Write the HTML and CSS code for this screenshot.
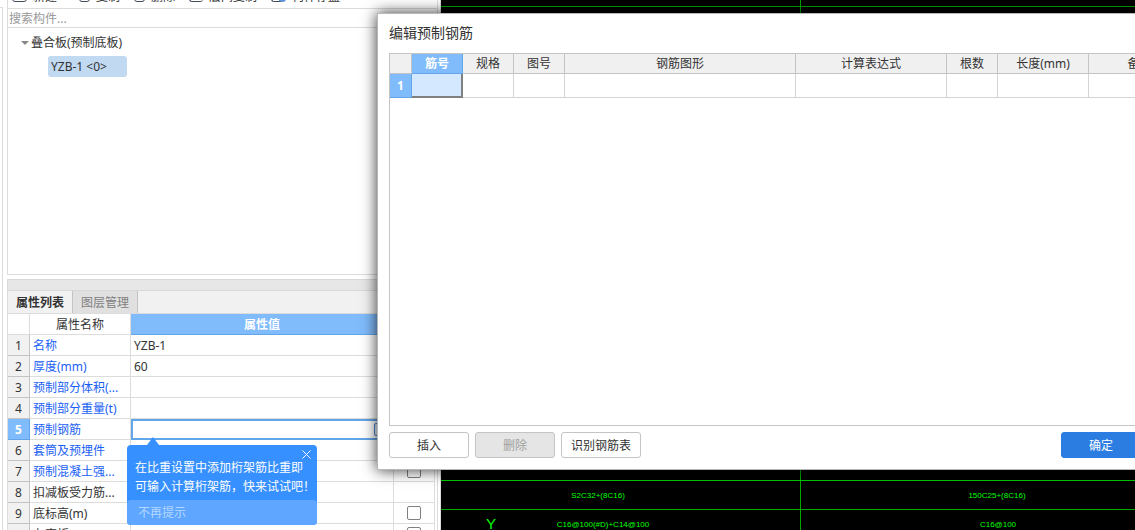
FILE: index.html
```html
<!DOCTYPE html>
<html lang="zh-CN">
<head>
  <meta charset="UTF-8">
  <meta name="viewport" content="width=device-width, initial-scale=1.0">
  <title>编辑预制钢筋</title>
  <link rel="stylesheet" href="styles.css">
</head>
<body>
  <div class="rail"></div>

  <aside class="sidebar">
    <!-- Toolbar, scrolled mostly out of view -->
    <div class="toolbar">
      <button type="button" class="has-menu"><i class="tool-icon wide"></i>新建</button>
      <button type="button"><i class="tool-icon"></i>复制</button>
      <button type="button"><i class="tool-icon"></i>删除</button>
      <button type="button"><i class="tool-icon half"></i>层间复制</button>
      <button type="button"><i class="tool-icon disk"></i>构件存盘</button>
    </div>
    <input class="search" type="text" placeholder="搜索构件..." aria-label="搜索构件">

    <div class="tree">
      <div class="tree-group"><span class="caret"></span>叠合板(预制底板)</div>
      <div class="tree-item">YZB-1 &lt;0&gt;</div>
    </div>

    <div class="splitter"></div>

    <div class="tabs">
      <button type="button" class="tab active">属性列表</button>
      <button type="button" class="tab">图层管理</button>
    </div>

    <div class="props-wrap">
      <table class="props">
        <colgroup><col class="c-num"><col class="c-name"><col class="c-value"><col class="c-check"></colgroup>
        <thead>
          <tr><th></th><th class="name">属性名称</th><th class="picked">属性值</th><th></th></tr>
        </thead>
        <tbody>
          <tr><th>1</th><td class="link">名称</td><td>YZB-1</td><td></td></tr>
          <tr><th>2</th><td class="link">厚度(mm)</td><td>60</td><td></td></tr>
          <tr><th>3</th><td class="link">预制部分体积(...</td><td></td><td></td></tr>
          <tr><th>4</th><td class="link">预制部分重量(t)</td><td></td><td></td></tr>
          <tr class="current"><th>5</th><td class="link">预制钢筋</td><td class="editing">
            <div class="cell-edit">
              <button type="button" class="more" aria-label="编辑预制钢筋">⋯</button>
              <div class="tip">
                <button type="button" class="tip-close" aria-label="关闭">
                  <svg width="9" height="9" viewBox="0 0 9 9"><path d="M0.5 0.5l8 8M8.5 0.5l-8 8" stroke="#fff" fill="none"/></svg>
                </button>
                <p>在比重设置中添加桁架筋比重即<br>可输入计算桁架筋，快来试试吧！</p>
                <button type="button" class="tip-mute">不再提示</button>
              </div>
            </div>
          </td><td></td></tr>
          <tr><th>6</th><td class="link">套筒及预埋件</td><td></td><td></td></tr>
          <tr><th>7</th><td class="link">预制混凝土强...</td><td></td><td><input type="checkbox" aria-label="预制混凝土强度"></td></tr>
          <tr><th>8</th><td>扣减板受力筋...</td><td></td><td></td></tr>
          <tr><th>9</th><td>底标高(m)</td><td></td><td><input type="checkbox" aria-label="底标高"></td></tr>
          <tr><th></th><td>左弯折</td><td></td><td><input type="checkbox" aria-label="左弯折"></td></tr>
        </tbody>
      </table>
    </div>
  </aside>

  <!-- CAD drawing -->
  <main class="canvas">
    <svg class="drawing">
      <g class="grid-lines">
        <path d="M0 6.5H4000M359.5 0V4000M0 509.5H4000"/>
        <path class="bright" d="M0 480.5H4000"/>
      </g>
      <g class="cad-text">
        <text x="157" y="498">S2C32+(8C16)</text>
        <text x="556" y="498">150C25+(8C16)</text>
        <text x="162" y="527">C16@100(#D)+C14@100</text>
        <text x="557" y="527">C16@100</text>
        <text class="axis" x="50" y="529">Y</text>
      </g>
    </svg>
  </main>

  <section class="dialog" role="dialog" aria-labelledby="dialogTitle">
    <h1 id="dialogTitle">编辑预制钢筋</h1>
    <div class="sheet">
      <table>
        <colgroup>
          <col class="w-index"><col class="w-small"><col class="w-small"><col class="w-small"><col class="w-shape">
          <col class="w-formula"><col class="w-small"><col class="w-length"><col class="w-note">
        </colgroup>
        <thead>
          <tr>
            <th></th><th class="picked">筋号</th><th>规格</th><th>图号</th><th>钢筋图形</th>
            <th>计算表达式</th><th>根数</th><th>长度(mm)</th><th>备注</th>
          </tr>
        </thead>
        <tbody>
          <tr><th class="picked">1</th><td class="focus"></td><td></td><td></td><td></td><td></td><td></td><td></td><td></td></tr>
        </tbody>
      </table>
    </div>
    <div class="actions">
      <button type="button">插入</button>
      <button type="button" disabled>删除</button>
      <button type="button">识别钢筋表</button>
      <button type="button" class="primary">确定</button>
    </div>
  </section>
</body>
</html>
```
FILE: styles.css
```css
* {
  box-sizing: border-box;
}
body {
  margin: 0;
  height: 100vh;
  display: flex;
  position: relative;
  overflow: hidden;
  background-color: #fff;
  color: #333;
  font-family: "Noto Sans", "Noto Sans CJK SC", sans-serif;
  font-size: 12px;
  line-height: 18px;
}
button,
input {
  font: inherit;
  color: inherit;
  margin: 0;
}
table {
  border-collapse: separate;
  border-spacing: 0;
  table-layout: fixed;
}
.rail {
  width: 3px;
  margin-top: 7px;
  border-top: 1px solid #dcdcdc;
  border-right: 1px solid #dcdcdc;
}

/* Left panel */
.sidebar {
  flex: 0 0 438px;
  padding: 0 2px 0 4px;
  border-right: 1px solid #dcdcdc;
}
.toolbar {
  display: flex;
  align-items: flex-end;
  gap: 14px;
  height: 9px;
  padding: 0 4px 4px;
  border: 1px solid #dcdcdc;
  border-top: none;
  overflow: hidden;
}
.toolbar button {
  display: flex;
  align-items: flex-end;
  gap: 6px;
  flex: none;
  padding: 0;
  border: none;
  background: none;
  line-height: 14px;
}
.toolbar .has-menu {
  padding-right: 8px;
}
.tool-icon {
  width: 11px;
  height: 12px;
  margin-bottom: 2px;
  border: 1px solid #444b5c;
  border-radius: 3px;
}
.tool-icon.wide {
  width: 15px;
}
.tool-icon.half {
  width: 14px;
  border-right: none;
}
.tool-icon.disk {
  width: 15px;
  border-right: 7px solid #5b95e5;
}
.search {
  display: block;
  width: 100%;
  height: 19px;
  padding: 1px 1px 0;
  border: 1px solid #dcdcdc;
  border-top: none;
  outline: none;
}
.search::placeholder {
  color: #999;
}
.tree {
  height: 247px;
  padding: 6px 0 0 13px;
  border: 1px solid #dcdcdc;
  border-top: none;
}
.tree-group {
  display: flex;
  align-items: center;
  gap: 2px;
}
.caret {
  border: 4px solid transparent;
  border-top: 4px solid #888;
  border-bottom: none;
}
.tree-item {
  width: 79px;
  height: 21px;
  margin: 4px 0 0 27px;
  padding: 2px 3px 0;
  border-radius: 3px;
  background-color: #c2d9f2;
}
.splitter {
  height: 12px;
  margin-top: 4px;
  border: 1px solid #d8d8d8;
  background-color: #e7e7e7;
}
.tabs {
  display: flex;
  height: 23px;
  border-left: 1px solid #dcdcdc;
  border-bottom: 1px solid #dcdcdc;
  background-color: #f1f1f1;
}
.tab {
  padding: 1px 8px 0;
  border: none;
  border-right: 1px solid #c4c4c4;
  background-color: #e0e0e0;
  color: #808080;
}
.tab.active {
  background-color: #f1f1f1;
  color: #333;
  font-weight: bold;
}

/* Property grid */
.props-wrap {
  padding-right: 2px;
  border-right: 1px solid #dcdcdc;
}
.props {
  width: 100%;
  border-left: 1px solid #dcdcdc;
}
.c-num {
  width: 22px;
}
.c-name {
  width: 101px;
}
.c-check {
  width: 41px;
}
.props th,
.props td {
  height: 21px;
  padding: 2px 3px 0;
  border-right: 1px solid #dcdcdc;
  border-bottom: 1px solid #dcdcdc;
  text-align: left;
  font-weight: normal;
  white-space: nowrap;
}
.props th {
  text-align: center;
}
.props tbody th {
  border-color: #c4c4c4;
  background-color: #f1f1f1;
}
.props .picked,
.props .current th {
  border-color: #62a5e8;
  background-color: #80bbfb;
  color: #fff;
  font-weight: bold;
}
.props .link {
  color: #1a5ff5;
}
.props td:last-child {
  padding: 0;
  text-align: center;
}
.props .editing {
  padding: 0;
  border: none;
}
.cell-edit {
  position: relative;
  display: flex;
  justify-content: flex-end;
  align-items: center;
  height: 21px;
  padding-right: 1px;
  border: 2px solid #62a5e8;
}
.more {
  width: 17px;
  height: 13px;
  padding: 0;
  border: 1px solid #4a87c9;
  border-radius: 2px;
  background-color: #e8f2fd;
  color: #2d6fb5;
  line-height: 9px;
}
input[type="checkbox"] {
  appearance: none;
  display: block;
  width: 14px;
  height: 14px;
  margin: 0 auto;
  border: 1px solid #808080;
  border-radius: 2px;
  background-color: #fff;
}

/* Hint bubble under the edited cell */
.tip {
  position: absolute;
  top: 24px;
  left: -6px;
  width: 190px;
  padding-top: 13px;
  border-radius: 4px;
  background-color: #3690ff;
  color: #fff;
}
.tip::before {
  content: "";
  position: absolute;
  top: -8px;
  left: 20px;
  border: 6px solid transparent;
  border-top: none;
  border-bottom: 8px solid #3690ff;
}
.tip p {
  margin: 0 0 4px;
  padding-left: 8px;
  line-height: 19px;
}
.tip-close {
  position: absolute;
  top: 5px;
  right: 6px;
  display: flex;
  padding: 0;
  border: none;
  background: none;
}
.tip-mute {
  display: block;
  width: 100%;
  height: 25px;
  padding: 0 11px;
  border: none;
  border-radius: 4px;
  background-color: #5ea6ff;
  color: #b4d6ff;
  text-align: left;
}

/* CAD drawing */
.canvas {
  flex: 1;
  min-width: 0;
  background-color: #000;
}
.drawing {
  display: block;
  width: 100%;
  height: 100%;
}
.grid-lines path {
  fill: none;
  stroke: #00a800;
}
.grid-lines .bright {
  stroke: #00d000;
}
.cad-text {
  fill: #00ff00;
  font-family: "Liberation Sans", sans-serif;
  font-size: 8px;
  text-anchor: middle;
}
.cad-text .axis {
  font-size: 15px;
}

/* Dialog */
.dialog {
  position: absolute;
  top: 13px;
  left: 377px;
  right: -18px;
  padding: 9px 11px 11px;
  border: 1px solid #b8b8b8;
  background-color: #fff;
  box-shadow: 0 0 14px rgba(0, 0, 0, 0.8);
}
.dialog h1 {
  margin: 0 0 10px;
  font-size: 14px;
  font-weight: normal;
  line-height: 20px;
}
.sheet {
  height: 373px;
  border: 1px solid #c4c4c4;
  overflow: hidden;
}
.sheet table {
  width: 801px;
}
.w-index {
  width: 22px;
}
.w-small {
  width: 51px;
}
.w-shape {
  width: 231px;
}
.w-formula {
  width: 151px;
}
.w-length {
  width: 91px;
}
.w-note {
  width: 102px;
}
.sheet th,
.sheet td {
  height: 24px;
  padding: 0;
  border-right: 1px solid #d4d4d4;
  border-bottom: 1px solid #d4d4d4;
  font-weight: normal;
}
.sheet thead th {
  height: 20px;
  padding-top: 1px;
  border-color: #c4c4c4;
  background-color: #f0f0f0;
}
.sheet .picked,
.sheet thead .picked {
  border-color: #62a5e8;
  background-color: #80bbfb;
  color: #fff;
  font-weight: bold;
}
.sheet .focus {
  border-right: 2px solid #808080;
  border-bottom: 2px solid #808080;
  background-color: #d4e9ff;
}
.actions {
  display: flex;
  gap: 6px;
  margin-top: 6px;
}
.actions button {
  width: 80px;
  height: 26px;
  padding: 1px 0 0;
  border: 1px solid #c4c4c4;
  border-radius: 3px;
  background-color: #fff;
}
.actions button:disabled {
  background-color: #e5e5e5;
  color: #a0a0a0;
}
.actions .primary {
  margin-left: auto;
  border-color: #2b7de1;
  background-color: #2b7de1;
  color: #fff;
}
```
